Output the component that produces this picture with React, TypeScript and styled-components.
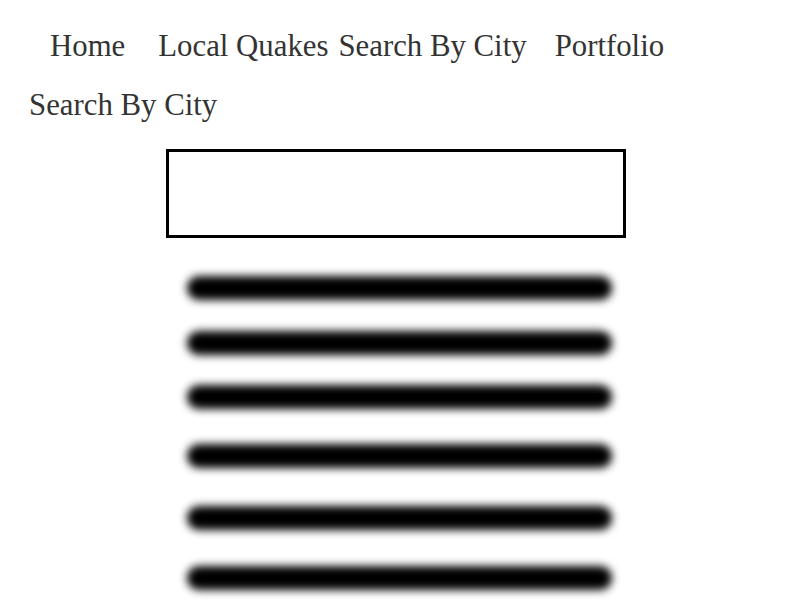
import React from "react";
import styled, { createGlobalStyle } from "styled-components";

const Global = createGlobalStyle`
  html, body { margin: 0; padding: 0; background: #fff; }
  body { font-family: "Liberation Serif", "Times New Roman", serif; color: #333; overflow: hidden; }
`;

const Page = styled.div`
  width: 800px;
  height: 600px;
  display: flex;
  flex-direction: column;
  overflow: hidden;
`;

const Nav = styled.nav`
  display: flex;
  align-items: baseline;
  padding-top: 29px;
  font-size: 30.8px;
  line-height: 35px;
`;

const NavLink = styled.a<{ $gap: number }>`
  margin-left: ${(p) => p.$gap}px;
  color: #333;
  text-decoration: none;
  white-space: nowrap;
`;

const Heading = styled.h1`
  margin: 24px 0 0 29px;
  font-size: 30.8px;
  font-weight: normal;
  line-height: 35px;
  color: #333;
`;

const SearchInput = styled.input`
  margin: 26px 0 0 166px;
  width: 460px;
  height: 89px;
  box-sizing: border-box;
  border: 3px solid #000;
  border-radius: 0;
  outline: none;
  padding: 0 10px;
  font-family: inherit;
  font-size: 20px;
`;

const BarList = styled.div`
  display: flex;
  flex-direction: column;
  padding-left: 187px;
  margin-top: 38px;
`;

const Bar = styled.div<{ $gap: number }>`
  width: 425px;
  height: 24px;
  margin-top: ${(p) => p.$gap}px;
  border-radius: 12px;
  background: #000;
  filter: blur(4px);
  flex-shrink: 0;
`;

const links = [
  { label: "Home", gap: 50 },
  { label: "Local Quakes", gap: 33 },
  { label: "Search By City", gap: 10 },
  { label: "Portfolio", gap: 28 },
];

const barGaps = [0, 31, 30, 35, 38, 36];

export default function App() {
  return (
    <>
      <Global />
      <Page>
        <Nav>
          {links.map((l) => (
            <NavLink key={l.label} href="#" $gap={l.gap}>
              {l.label}
            </NavLink>
          ))}
        </Nav>
        <Heading>Search By City</Heading>
        <SearchInput type="text" aria-label="City" />
        <BarList>
          {barGaps.map((g, i) => (
            <Bar key={i} $gap={g} />
          ))}
        </BarList>
      </Page>
    </>
  );
}
